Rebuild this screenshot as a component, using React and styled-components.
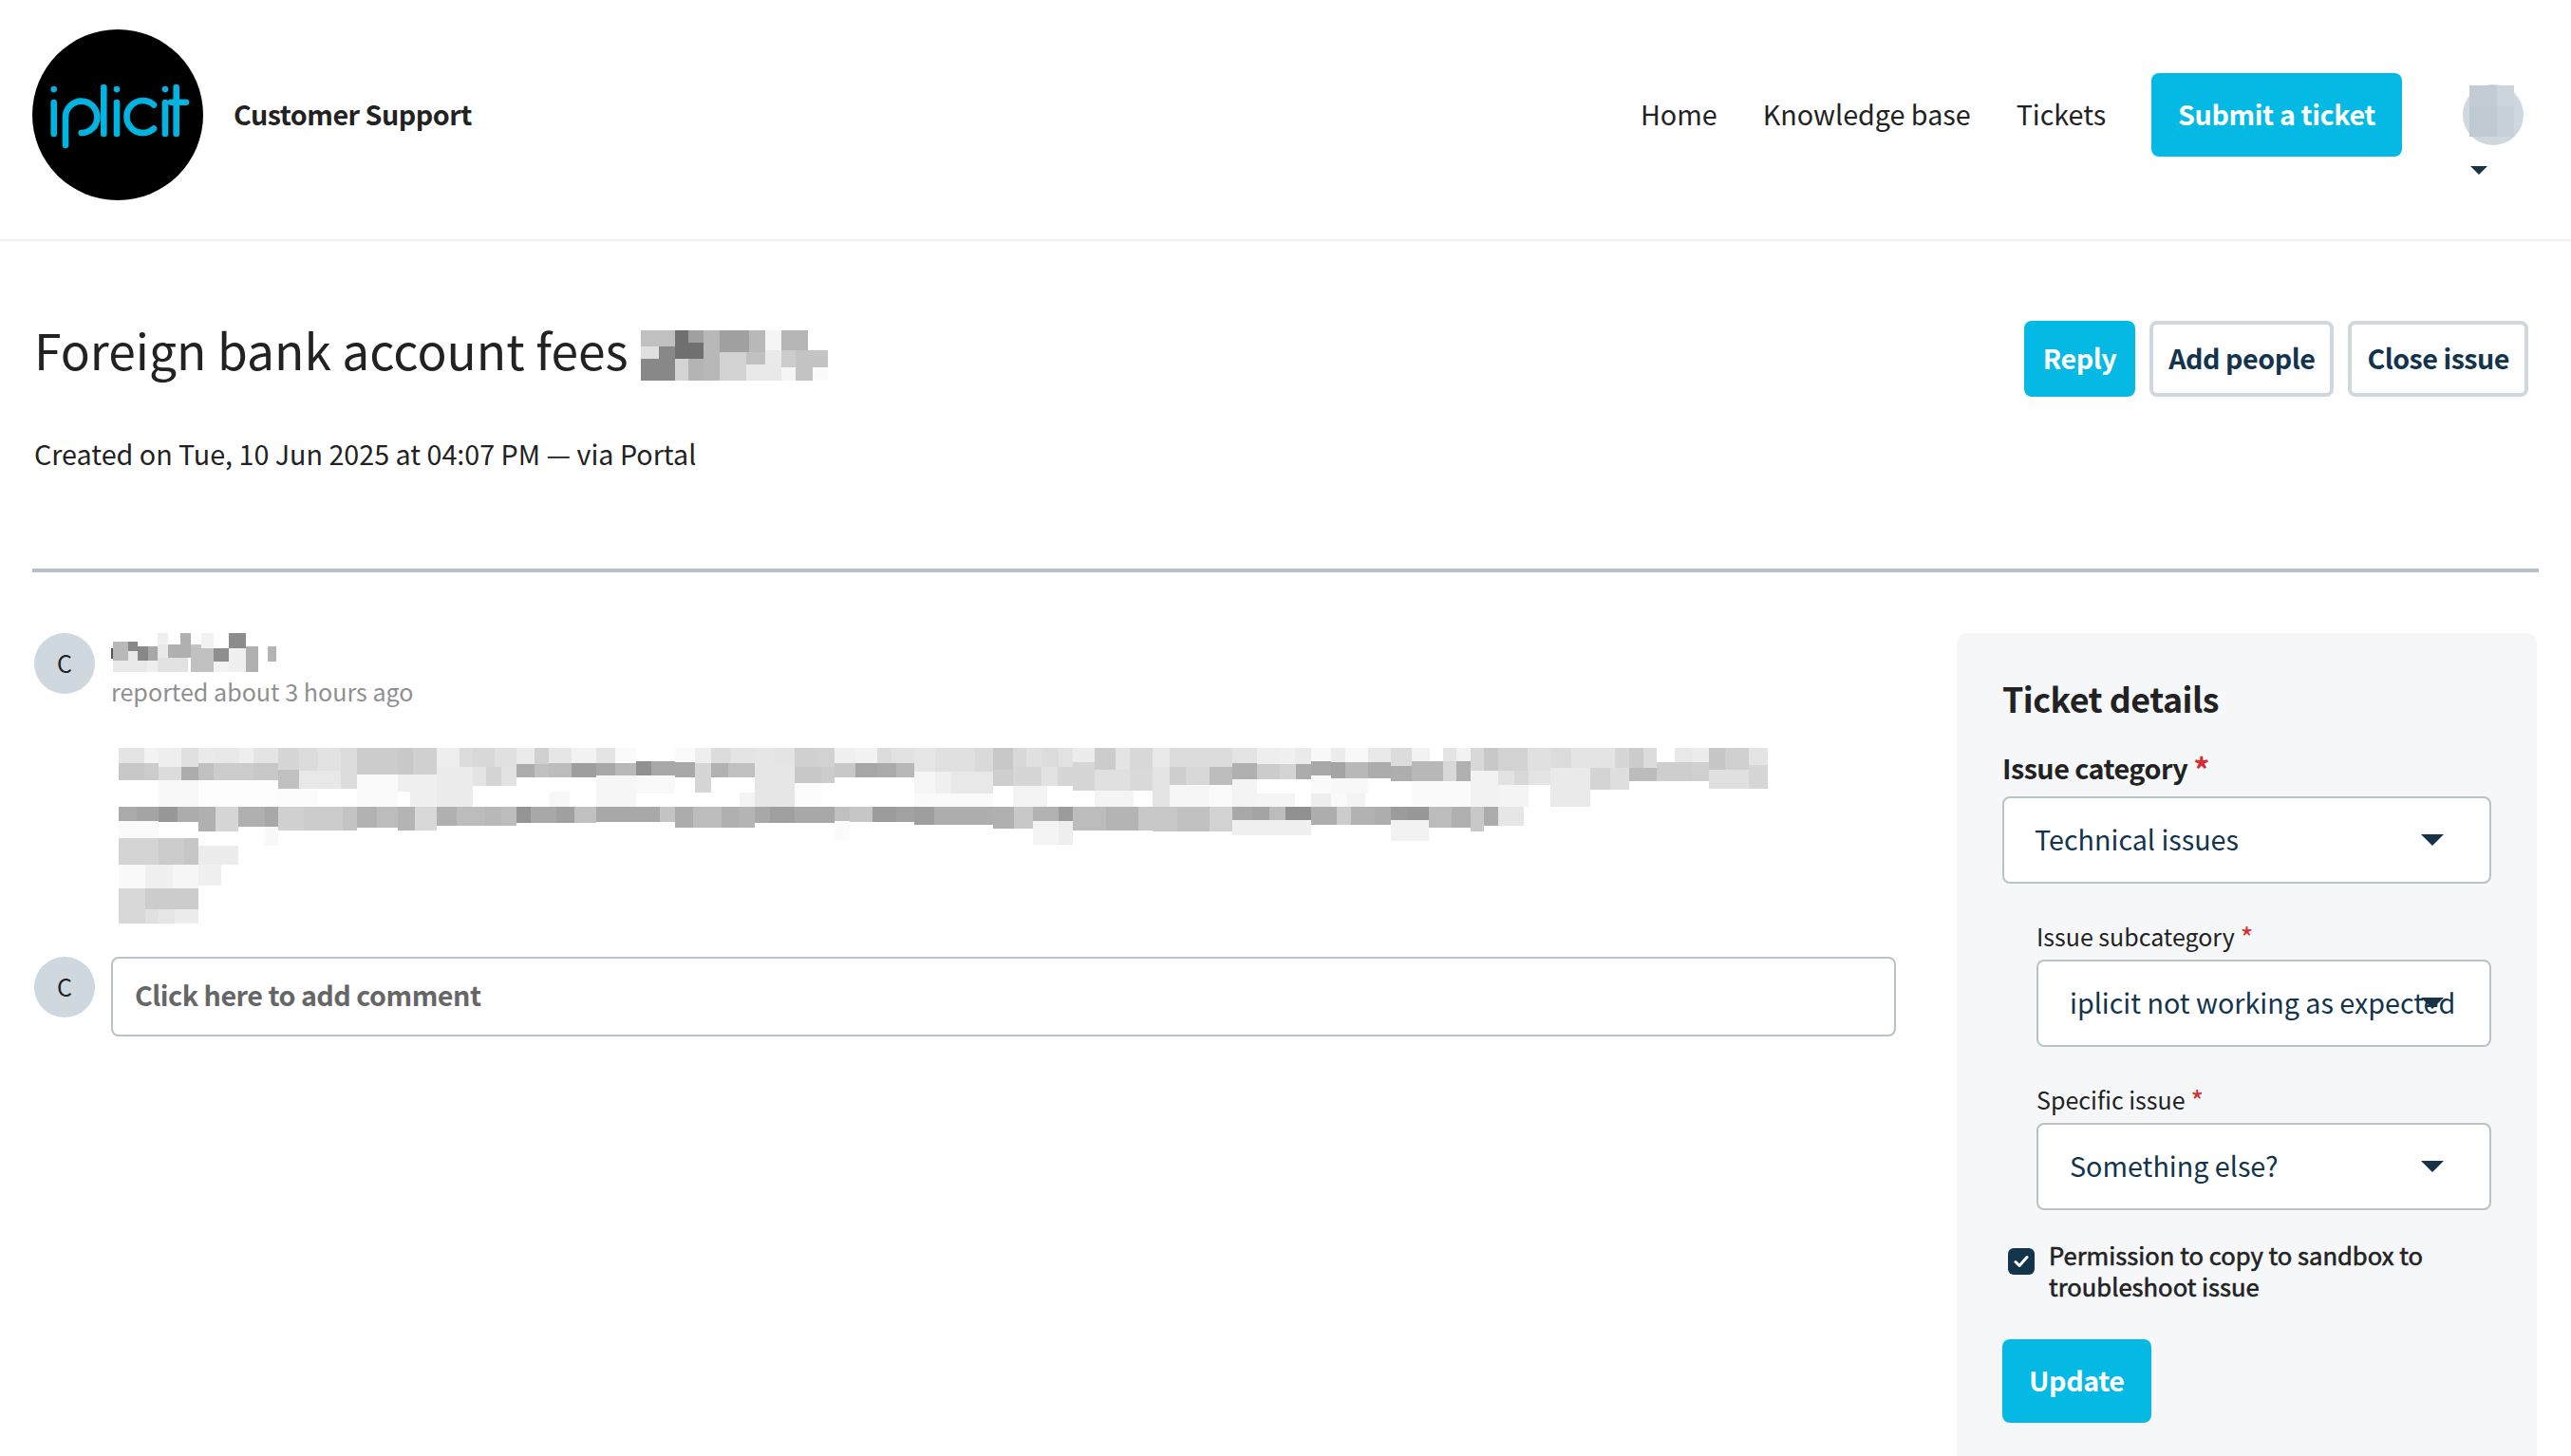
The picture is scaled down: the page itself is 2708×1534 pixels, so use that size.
import React from 'react';
import styled, { createGlobalStyle } from 'styled-components';

const GlobalStyle = createGlobalStyle`
  html, body {
    margin: 0;
    background: #fff;
    color: #222;
    font-family: "Noto Sans CJK JP", "Noto Sans", sans-serif;
  }
  #root { height: 1534px; overflow: hidden; }
  * { box-sizing: border-box; }
`;

const CYAN = '#04b9e4';
const NAVY = '#12344d';

const Page = styled.div`
  height: 1534px;
  display: flex;
  flex-direction: column;
`;

/* ---------- header ---------- */
const Header = styled.header`
  height: 254px;
  flex: none;
  display: flex;
  align-items: center;
  padding: 0 50px 10px 34px;
  border-bottom: 2px solid #f0f2f4;
`;
const LogoMark = styled.svg`
  width: 180px;
  height: 180px;
  flex: none;
  display: block;
`;
const Brand = styled.span`
  margin-left: 32px;
  padding-bottom: 2px;
  font-size: 28.7px;
  line-height: 40px;
  font-weight: 700;
  letter-spacing: -0.5px;
  flex: 1;
`;
const Nav = styled.nav`
  display: flex;
  align-items: center;
  gap: 48px;
`;
const NavLink = styled.a`
  padding-bottom: 2px;
  font-size: 28.7px;
  line-height: 40px;
  color: #222;
`;
const PrimaryButton = styled.button`
  height: 88px;
  padding: 0 28px 3px;
  border: 0;
  border-radius: 8px;
  background: ${CYAN};
  color: #fff;
  font: 700 28.7px/40px "Noto Sans CJK JP", "Noto Sans", sans-serif;
  letter-spacing: -0.4px;
`;
const UserMenu = styled.div`
  position: relative;
  width: 64px;
  height: 64px;
  margin-left: 64px;
`;
const UserCircle = styled.div`
  width: 64px;
  height: 64px;
  border-radius: 50%;
  background: #cfd7df;
`;
const UserPatch = styled.svg`
  position: absolute;
  left: 7px;
  top: 1px;
  width: 47px;
  height: 54px;
`;
const UserCaret = styled.svg`
  position: absolute;
  left: 8px;
  top: 86px;
  width: 18px;
  height: 9px;
`;

/* ---------- ticket heading ---------- */
const TicketHead = styled.section`
  flex: none;
  padding: 84px 45px 0 36px;
`;
const TitleRow = styled.div`
  height: 80px;
  display: flex;
  align-items: flex-start;
  justify-content: space-between;
`;
const Title = styled.h1`
  margin: -6px 0 0;
  display: flex;
  align-items: flex-start;
  gap: 13px;
  font-size: 51.5px;
  line-height: 72px;
  font-weight: 400;
  color: #222;
`;
const TitleMosaic = styled.svg`
  display: block;
  flex: none;
  margin-top: 16px;
  shape-rendering: crispEdges;
`;
const Actions = styled.div`
  display: flex;
  gap: 15px;
`;
const ReplyButton = styled.button`
  height: 80px;
  padding: 0 16px 3px;
  border: 4px solid ${(p) => (p.$primary ? CYAN : '#cfd7df')};
  border-radius: 8px;
  background: ${(p) => (p.$primary ? CYAN : '#fff')};
  color: ${(p) => (p.$primary ? '#fff' : NAVY)};
  font: 700 28.7px/40px "Noto Sans CJK JP", "Noto Sans", sans-serif;
  letter-spacing: -0.5px;
`;
const Meta = styled.p`
  margin: 40px 0 0;
  font-size: 28.7px;
  line-height: 40px;
  color: #222;
`;
const Divider = styled.hr`
  flex: none;
  height: 4px;
  margin: 101px 34px 0 34px;
  border: 0;
  background: #b9c0c5;
`;

/* ---------- body ---------- */
const Main = styled.main`
  flex: 1;
  min-height: 0;
  display: flex;
  justify-content: space-between;
  padding: 64px 36px 0;
`;
const Conversation = styled.div`
  width: 1961px;
  flex: none;
`;
const CommentRow = styled.div`
  display: flex;
  gap: 17px;
  align-items: flex-start;
`;
const Avatar = styled.div`
  width: 64px;
  height: 64px;
  flex: none;
  padding-bottom: 3px;
  border-radius: 50%;
  background: #cfd7df;
  display: flex;
  align-items: center;
  justify-content: center;
  font-size: 25px;
  color: #222;
`;
const CommentBody = styled.div`
  flex: 1;
  min-width: 0;
`;
const Mosaic = styled.svg`
  display: block;
  flex: none;
  shape-rendering: crispEdges;
`;
const Reported = styled.div`
  margin-top: 2px;
  font-size: 25.1px;
  line-height: 36px;
  color: #8f8f8f;
`;
const MessageText = styled.div`
  margin: 42px 0 34px 8px;
`;
const CommentBox = styled.div`
  flex: 1;
  height: 84px;
  display: flex;
  align-items: center;
  padding: 0 23px 5px;
  border: 2px solid #b9c2c7;
  border-radius: 8px;
  font-size: 28.7px;
  font-weight: 700;
  letter-spacing: -0.5px;
  color: #666;
`;

/* ---------- sidebar ---------- */
const Panel = styled.aside`
  width: 611px;
  flex: none;
  padding: 43px 48px 0;
  background: #f5f7f9;
  border-radius: 10px 10px 0 0;
`;
const PanelTitle = styled.h2`
  margin: 0 0 29px;
  font-size: 35.8px;
  line-height: 50px;
  font-weight: 700;
  letter-spacing: -0.5px;
  color: #222;
`;
const FieldLabel = styled.div`
  font-size: ${(p) => (p.$sub ? 25 : 28.7)}px;
  line-height: ${(p) => (p.$sub ? 36 : 40)}px;
  font-weight: ${(p) => (p.$sub ? 400 : 700)};
  letter-spacing: ${(p) => (p.$sub ? 0 : -0.5)}px;
  margin-bottom: ${(p) => (p.$sub ? 7 : 10)}px;
  color: #222;
`;
const Required = styled.span`
  color: #d72d30;
  font-size: ${(p) => (p.$sub ? 30 : 34)}px;
  font-weight: ${(p) => (p.$sub ? 400 : 700)};
  vertical-align: -3px;
  line-height: 0;
`;
const SubField = styled.div`
  margin: 37px 0 0 36px;
`;
const SelectBox = styled.div`
  position: relative;
  height: 92px;
  display: flex;
  align-items: center;
  padding: 0 0 4px ${(p) => (p.$sub ? 33 : 32)}px;
  background: #fff;
  border: 2px solid #b9c2c7;
  border-radius: 8px;
  font-size: 28.7px;
  color: ${NAVY};
  white-space: nowrap;
`;
const SelectCaret = styled.svg`
  position: absolute;
  right: 48px;
  top: 38px;
  width: 24px;
  height: 12px;
`;
const CheckRow = styled.label`
  display: flex;
  gap: 15px;
  margin: 30px 0 0 6px;
  font-size: 25.6px;
  line-height: 33px;
  -webkit-text-stroke: 0.6px #222;
  color: #222;
`;
const CheckBox = styled.span`
  width: 28px;
  height: 28px;
  flex: none;
  margin-top: 10px;
  display: flex;
  align-items: center;
  justify-content: center;
  border-radius: 6px;
  background: ${NAVY};
`;
const UpdateWrap = styled.div`
  margin-top: 40px;
`;

/* ---------- redacted tiles: x0 x1 y0 y1 grey, in zoomed coordinates ---------- */
const parse = (s) => s.trim().split(/\s*;\s*/).filter(Boolean).map((t) => t.split(/\s+/));

const titleTiles = parse(`
42 150 24 75 c0;150 192 24 114 70;192 240 24 63 a0;192 240 63 114 70;240 291 24 183 b8;291 384 24 93 a0;
384 435 24 93 b8;435 486 24 87 f5;486 570 24 87 b6;42 99 75 114 e0;99 150 75 114 88;42 150 114 183 88;
150 192 114 183 d4;192 240 114 183 b4;291 375 93 183 d2;375 435 93 132 c0;375 486 132 183 e8;435 486 87 132 ea;
486 531 87 141 cc;531 633 87 141 c4;486 531 141 183 f5;531 585 141 183 c4;585 633 141 183 fb
`);

const nameTiles = parse(`
21 27 66 100 55;168 201 18 54 ee;240 273 18 54 b0;306 345 18 66 f2;393 447 18 66 8c;27 75 45 105 b8;75 105 45 75 88;
75 105 75 105 e8;105 138 60 105 88;138 168 60 105 a8;168 201 54 96 e8;201 273 54 96 b0;273 306 54 66 c4;
273 345 66 141 c0;345 393 66 108 8e;393 447 66 141 f0;447 486 60 141 b0;516 543 60 108 b4;27 135 105 141 e8;
135 168 105 141 ee;168 264 96 141 e2;345 393 108 141 f2
`);

const bodyLeft = parse(`
13 84 20 70 e4;84 123 20 70 f2;123 186 20 80 ee;186 233 20 80 e0;233 274 20 68 ea;274 345 20 70 e8;345 384 20 70 ee;
384 452 20 70 e4;452 510 20 90 d6;510 562 20 92 dc;562 625 20 92 e2;625 669 20 92 dc;669 739 20 105 cc;739 780 20 105 cc;
780 822 20 105 c8;822 889 20 105 d0;889 951 20 80 ee;951 988 20 80 dc;988 1048 20 80 d8;1048 1108 20 80 e0;1108 1158 20 72 ea;
1158 1197 20 72 d0;1197 1260 20 68 e6;1260 1328 20 68 f2;1328 1380 20 68 e4;1380 1437 20 62 fa;
13 84 70 122 c8;84 123 70 122 cc;123 186 80 122 dc;186 233 80 122 ac;233 274 68 122 c0;274 384 70 122 cc;384 452 70 122 c8;
452 510 90 150 c0;510 625 92 150 e8;625 669 92 150 dc;669 780 105 158 fa;780 889 105 158 f0;889 988 80 207 ec;988 1024 80 140 e4;
1024 1066 80 140 d4;1066 1108 80 140 e2;1108 1158 72 114 ac;1158 1197 72 114 c0;1197 1260 68 114 bc;1260 1328 68 114 9e;
1328 1380 68 108 a8;1380 1437 68 108 b8;1437 1479 62 108 90;1479 1544 62 108 a8;
123 233 122 207 f8;233 452 122 207 fd;452 562 150 207 fc;669 780 158 207 fa;815 889 158 207 f0;1197 1254 158 207 f8;
1328 1437 108 207 f6;1437 1544 108 165 f9;
13 63 207 252 aa;63 123 207 252 a4;123 175 207 255 98;175 233 207 255 ac;233 280 207 285 b0;280 342 207 285 d6;342 416 207 270 b0;
416 452 207 270 a8;452 523 207 282 d0;523 630 207 282 cc;630 669 207 282 c4;669 723 207 273 b2;723 780 207 273 bc;780 828 207 282 b4;
828 889 207 282 d8;889 943 207 267 b0;943 1022 207 267 bc;1022 1065 207 267 b8;1065 1108 207 267 bc;1108 1147 207 258 94;
1147 1218 207 258 a8;1218 1267 207 258 a0;1267 1328 207 258 c0;1328 1448 207 255 a8;1448 1503 207 255 a8;1503 1544 207 255 c4;
13 123 252 306 fa;416 452 270 330 f8;
13 123 306 390 d4;123 193 306 390 cc;193 233 306 390 c6;233 342 330 390 ec;
13 87 390 465 f9;87 162 390 465 f0;162 233 390 465 f6;233 295 390 456 f0;
13 87 465 530 d8;87 233 465 530 cc;13 87 530 576 d8;87 123 530 576 e0;123 166 530 576 e6;166 233 530 576 ec
`);

const bodyMiddle = parse(`
29 84 20 65 fa;84 128 20 70 ee;128 183 20 70 dc;183 248 20 70 e4;248 303 20 78 e6;303 358 20 78 e4;358 410 20 80 d0;410 468 20 80 d2;
468 525 20 68 f0;525 585 20 68 f2;585 625 20 68 dc;625 687 20 68 e2;687 745 20 95 e6;745 855 20 95 e0;855 904 20 95 da;904 959 20 90 c8;
959 996 20 82 d8;996 1037 20 82 e0;1037 1085 20 82 dc;1085 1124 20 82 e2;1124 1184 20 65 ec;1184 1241 20 90 cc;1241 1281 20 90 e4;
1281 1343 20 90 d8;1343 1390 20 80 e8;1390 1563 20 80 dc;
29 84 65 114 a8;84 128 70 162 d6;128 175 70 114 b2;175 248 70 114 c0;248 358 78 207 e6;358 430 80 132 c8;430 468 80 132 cc;
468 525 68 114 c8;525 585 68 114 a6;585 638 68 114 aa;638 687 68 114 b8;687 745 95 165 f6;745 790 95 165 f0;790 904 95 165 e8;
904 959 90 140 ce;959 1037 82 140 d6;1037 1082 82 140 e2;1082 1124 82 140 d6;1124 1184 65 155 d6;1184 1281 90 155 e0;1281 1343 90 155 da;
1343 1390 80 207 e4;1390 1435 80 138 ce;1435 1500 80 138 d8;1500 1563 80 138 bc;
206 248 162 207 f4;358 430 132 207 fc;687 904 165 207 fa;959 1052 140 207 f3;1184 1290 155 207 f4;1390 1500 138 207 f6;1500 1563 138 207 fa;
29 78 207 272 ac;78 157 207 272 bc;157 206 207 272 b0;206 248 207 272 b4;248 290 207 258 a8;290 358 207 258 a0;358 422 207 258 a8;
422 468 207 258 a8;468 510 207 252 c0;510 572 207 255 c6;572 638 207 255 9c;638 687 207 255 a2;687 742 207 264 9e;742 904 207 264 ae;
904 962 207 275 b0;962 1014 207 275 c8;1014 1085 207 252 b2;1085 1124 207 252 9c;1124 1215 207 282 bc;1215 1304 207 282 b4;
1304 1343 207 282 c8;1343 1410 207 285 c8;1410 1500 207 285 c0;1500 1563 207 285 d2;
1014 1085 252 327 f4;1085 1124 252 327 ee;468 510 252 312 fb
`);

const bodyRight = parse(`
47 115 20 68 e4;115 178 20 72 ee;178 220 20 72 f0;220 264 20 72 ea;264 319 20 62 f8;319 358 20 66 ec;358 421 20 66 f8;421 483 20 66 e8;
483 541 20 78 dc;541 590 20 62 f2;627 665 20 62 e4;665 703 20 62 f2;703 740 20 92 d8;740 779 20 92 c8;779 860 20 92 d2;860 923 20 92 e0;
923 980 20 83 dc;980 1100 20 83 e4;1100 1139 20 83 d6;1139 1178 20 83 cc;1178 1215 20 83 dc;1265 1314 20 66 e8;1314 1359 20 66 ec;
1359 1403 20 90 c6;1403 1469 20 90 d0;1469 1521 20 75 e4;
47 115 68 120 b0;115 178 72 120 cc;178 222 72 120 d4;222 264 72 120 ac;264 319 62 108 a8;319 358 66 117 a4;358 421 66 117 b8;421 483 66 117 ac;
483 541 78 126 ae;541 627 62 126 b8;627 665 62 126 d8;665 703 62 126 b0;703 779 92 207 f2;779 823 92 138 e2;823 862 92 138 d8;862 923 92 138 e4;
923 1032 83 207 ea;1032 1087 83 153 d4;1087 1139 83 153 de;1139 1215 83 126 bc;1215 1314 66 126 ce;1314 1359 66 126 d0;1359 1469 90 150 e0;1469 1521 75 150 d6;
47 115 120 207 f4;115 220 165 207 f5;264 319 108 165 fa;319 421 117 165 f8;264 319 165 207 ee;319 363 165 207 fa;363 412 165 207 f4;541 703 126 207 fb;779 862 138 207 f4;
47 102 207 249 a8;102 150 207 249 a4;150 193 207 249 bc;193 264 207 249 90;264 335 207 264 ae;335 374 207 264 cc;374 438 207 264 b2;438 483 207 264 ae;
483 530 207 249 9c;530 588 207 249 98;588 651 207 273 bc;651 703 207 273 b0;703 740 207 285 c8;740 779 207 267 ac;779 849 207 267 e6;
47 264 249 297 f0;483 588 249 315 f2
`);

const Tiles = ({ tiles }) =>
  tiles.map(([x0, x1, y0, y1, g]) => (
    <rect key={`${x0}-${y0}`} x={x0} y={y0} width={x1 - x0} height={y1 - y0} fill={`#${g}${g}${g}`} />
  ));

// the three body crops were zoomed 2.613x wide, 3x high, from these left edges
const BodyBlock = ({ tiles, left }) => (
  <g transform={`translate(${left - 125} -7) scale(${1 / 2.613} ${1 / 3})`}>
    <Tiles tiles={tiles} />
  </g>
);

const Caret = ({ as: Comp }) => (
  <Comp viewBox="0 0 24 12" preserveAspectRatio="none">
    <path d="M0 0h24L12 12z" fill="#183247" />
  </Comp>
);

const LOGO_BLUE = '#00b4e1';

const Logo = () => (
  <LogoMark viewBox="4 2 180 180" role="img" aria-label="iplicit">
    <circle cx="94" cy="92" r="90" fill="#000" />
    <g fill="none" stroke={LOGO_BLUE} strokeWidth="6.6" strokeLinecap="round">
      <path d="M26.7 65v.1M26.7 79v33" />
      <path d="M39 124V94a16.7 16.7 0 1 1 16.7 17" />
      <path d="M79.3 63v49" />
      <path d="M93 65v.1M93 79v33" />
      <path d="M132 81.5a17 17 0 1 0 0 25" />
      <path d="M144 65v.1M144 79v33" />
      <path d="M155.7 63v49M150 78.7h16" />
    </g>
  </LogoMark>
);

const Field = ({ label, value }) => (
  <SubField>
    <FieldLabel $sub>
      {label} <Required $sub>*</Required>
    </FieldLabel>
    <SelectBox $sub>
      {value}
      <Caret as={SelectCaret} />
    </SelectBox>
  </SubField>
);

export default function App() {
  return (
    <Page>
      <GlobalStyle />
      <Header>
        <Logo />
        <Brand>Customer Support</Brand>
        <Nav>
          <NavLink>Home</NavLink>
          <NavLink>Knowledge base</NavLink>
          <NavLink>Tickets</NavLink>
          <PrimaryButton>Submit a ticket</PrimaryButton>
        </Nav>
        <UserMenu>
          <UserCircle />
          <UserPatch viewBox="0 0 47 54">
            <rect width="29" height="22" fill="#c3ccd5" />
            <rect y="22" width="29" height="32" fill="#bfc9d2" />
            <rect x="29" width="18" height="22" fill="#ccd4dc" />
            <rect x="29" y="22" width="18" height="32" fill="#c8d0d9" />
          </UserPatch>
          <Caret as={UserCaret} />
        </UserMenu>
      </Header>

      <TicketHead>
        <TitleRow>
          <Title>
            Foreign bank account fees
            <TitleMosaic width="197" height="53" viewBox="42 24 591 159" preserveAspectRatio="none">
              <Tiles tiles={titleTiles} />
            </TitleMosaic>
          </Title>
          <Actions>
            <ReplyButton $primary>Reply</ReplyButton>
            <ReplyButton>Add people</ReplyButton>
            <ReplyButton>Close issue</ReplyButton>
          </Actions>
        </TitleRow>
        <Meta>Created on Tue, 10 Jun 2025 at 04:07 PM — via Portal</Meta>
      </TicketHead>
      <Divider />

      <Main>
        <Conversation>
          <CommentRow>
            <Avatar>C</Avatar>
            <CommentBody>
              <Mosaic width="174" height="41" viewBox="21 18 522 123" preserveAspectRatio="none">
                <Tiles tiles={nameTiles} />
              </Mosaic>
              <Reported>reported about 3 hours ago</Reported>
              <MessageText>
                <Mosaic width="1737" height="186" viewBox="0 0 1737 186">
                  <BodyBlock tiles={bodyLeft} left={120} />
                  <BodyBlock tiles={bodyMiddle} left={700} />
                  <BodyBlock tiles={bodyRight} left={1280} />
                </Mosaic>
              </MessageText>
            </CommentBody>
          </CommentRow>
          <CommentRow>
            <Avatar>C</Avatar>
            <CommentBox>Click here to add comment</CommentBox>
          </CommentRow>
        </Conversation>

        <Panel>
          <PanelTitle>Ticket details</PanelTitle>
          <FieldLabel>
            Issue category <Required>*</Required>
          </FieldLabel>
          <SelectBox>
            Technical issues
            <Caret as={SelectCaret} />
          </SelectBox>
          <Field label="Issue subcategory" value="iplicit not working as expected" />
          <Field label="Specific issue" value="Something else?" />
          <CheckRow>
            <CheckBox>
              <svg width="16" height="14" viewBox="0 0 16 14" fill="none">
                <path d="M2 7.5l4 4 8-9" stroke="#fff" strokeWidth="3" strokeLinecap="round" strokeLinejoin="round" />
              </svg>
            </CheckBox>
            <span>Permission to copy to sandbox to troubleshoot issue</span>
          </CheckRow>
          <UpdateWrap>
            <PrimaryButton>Update</PrimaryButton>
          </UpdateWrap>
        </Panel>
      </Main>
    </Page>
  );
}
